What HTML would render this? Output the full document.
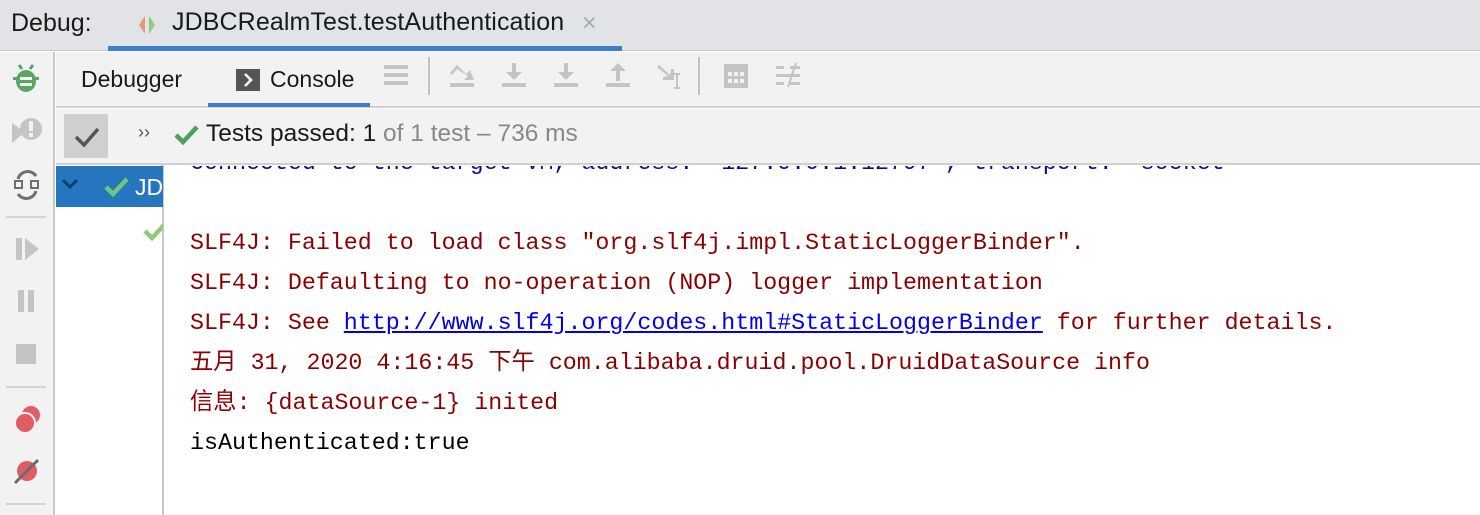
<!DOCTYPE html>
<html><head><meta charset="utf-8"><style>
*{margin:0;padding:0;box-sizing:border-box}
body{width:1480px;height:515px;overflow:hidden;background:#fff;font-family:"Liberation Sans","Noto Sans CJK SC",sans-serif;position:relative}
.abs{position:absolute}
.mono{font-family:"Liberation Mono","Noto Sans CJK SC",monospace;font-size:23.3px;white-space:pre}
</style></head><body>
<!-- top bar -->
<div class="abs" style="left:0;top:0;width:1480px;height:51px;background:#e1e3e7;border-bottom:1px solid #c9c9c9"></div>
<div class="abs" style="left:11px;top:9px;font-size:25px;color:#1a1a1a">Debug:</div>
<svg class="abs" style="left:136px;top:14px" width="24" height="22"><path d="M9 2 L3 11 L9 20Z" fill="#e8987a"/><path d="M13 2 L19 11 L13 20Z" fill="#8fcb7a"/></svg>
<div class="abs" style="left:172px;top:8px;font-size:25px;color:#1a1a1a;letter-spacing:0.1px">JDBCRealmTest.testAuthentication</div>
<div class="abs" style="left:582px;top:9px;font-size:25px;color:#aaa">×</div>
<div class="abs" style="left:108px;top:46px;width:514px;height:5px;background:#3d7fc8"></div>
<!-- left toolbar -->
<div class="abs" style="left:0;top:52px;width:55px;height:463px;background:#f2f2f2;border-right:2px solid #c9c9c9"></div>
<svg class="abs" style="left:10px;top:62px" width="32" height="34"><path d="M9 3 L12 7 M23 3 L20 7" stroke="#5aa564" stroke-width="3"/><ellipse cx="16" cy="19" rx="10" ry="11" fill="#5aa564"/><rect x="3" y="15" width="26" height="3" fill="#5aa564"/><rect x="10" y="15" width="12" height="3" fill="#f2f2f2"/><rect x="10" y="21" width="12" height="3" fill="#f2f2f2"/></svg>
<svg class="abs" style="left:10px;top:115px" width="34" height="32"><path d="M2 8 L15 17 L2 28Z" fill="#c4c4c4"/><circle cx="21" cy="14" r="11" fill="#c4c4c4"/><rect x="19" y="6" width="4" height="10" fill="#f2f2f2"/><rect x="19" y="18" width="4" height="4" fill="#f2f2f2"/></svg>
<svg class="abs" style="left:12px;top:167px" width="30" height="36"><path d="M6 12 A10 10 0 0 1 24 9" stroke="#6f6f6f" stroke-width="3" fill="none"/><path d="M24 24 A10 10 0 0 1 6 27" stroke="#6f6f6f" stroke-width="3" fill="none"/><rect x="3" y="14" width="7" height="7" stroke="#6f6f6f" stroke-width="2" fill="none"/><rect x="19" y="14" width="7" height="7" stroke="#6f6f6f" stroke-width="2" fill="none"/></svg>
<div class="abs" style="left:6px;top:216px;width:40px;height:2px;background:#d4d4d4"></div>
<svg class="abs" style="left:14px;top:236px" width="28" height="26"><rect x="2" y="2" width="6" height="22" fill="#c4c4c4"/><path d="M11 2 L25 13 L11 24Z" fill="#c4c4c4"/></svg>
<svg class="abs" style="left:16px;top:288px" width="20" height="26"><rect x="2" y="2" width="6" height="22" fill="#c4c4c4"/><rect x="12" y="2" width="6" height="22" fill="#c4c4c4"/></svg>
<div class="abs" style="left:16px;top:344px;width:20px;height:20px;background:#c4c4c4"></div>
<div class="abs" style="left:6px;top:386px;width:40px;height:2px;background:#d4d4d4"></div>
<svg class="abs" style="left:12px;top:404px" width="30" height="30"><circle cx="19" cy="11" r="9" fill="#e05d63"/><circle cx="13" cy="19" r="10" fill="#e05d63" stroke="#f2f2f2" stroke-width="2"/></svg>
<svg class="abs" style="left:12px;top:456px" width="30" height="30"><circle cx="15" cy="15" r="10" fill="#e05d63"/><path d="M3 27 L26 4" stroke="#6b6b6b" stroke-width="3"/></svg>
<div class="abs" style="left:6px;top:503px;width:40px;height:2px;background:#d4d4d4"></div>
<!-- toolbar row -->
<div class="abs" style="left:56px;top:52px;width:1424px;height:56px;background:#f2f2f2;border-bottom:2px solid #d0d0d0"></div>
<div class="abs" style="left:81px;top:66px;font-size:23px;color:#1a1a1a">Debugger</div>
<svg class="abs" style="left:236px;top:69px" width="24" height="22"><rect width="24" height="22" fill="#555"/><path d="M9 5 L15 11 L9 17" stroke="#fff" stroke-width="2.5" fill="none"/></svg>
<div class="abs" style="left:270px;top:66px;font-size:23px;color:#1a1a1a">Console</div>
<div class="abs" style="left:208px;top:103px;width:162px;height:4px;background:#3d7fc8"></div>
<svg class="abs" style="left:370px;top:55px" width="450" height="50" fill="#c4c4c4">
<rect x="14" y="10" width="24" height="4"/><rect x="14" y="18" width="24" height="4"/><rect x="14" y="26" width="24" height="4"/>
<rect x="58" y="2" width="2" height="38"/>
<rect x="80" y="28" width="24" height="4"/><path d="M80 18 L87 10 L96 19 L100 15 L104 25 L94 25 L98 21 L87 14 L82 20Z"/>
<rect x="132" y="28" width="24" height="4"/><rect x="142" y="8" width="4" height="12"/><path d="M136 17 L152 17 L144 25Z"/>
<rect x="184" y="28" width="24" height="4"/><rect x="194" y="8" width="4" height="12"/><path d="M188 17 L204 17 L196 25Z"/>
<rect x="236" y="28" width="24" height="4"/><rect x="246" y="14" width="4" height="12"/><path d="M240 16 L256 16 L248 8Z"/>
<path d="M289 10 L300 20 L301 14 L304 14 L304 25 L293 25 L293 22 L298 21 L287 12Z"/><rect x="304" y="18" width="6" height="2"/><rect x="306" y="18" width="2" height="16"/><rect x="304" y="32" width="6" height="2"/>
<rect x="328" y="2" width="2" height="38"/>
<path d="M354 9 h24 v24 h-24Z M358 17 v4 h4 v-4Z M364 17 v4 h4 v-4Z M370 17 v4 h4 v-4Z M358 24 v4 h4 v-4Z M364 24 v4 h4 v-4Z M370 24 v4 h4 v-4Z" fill-rule="evenodd"/>
<rect x="406" y="11" width="8" height="3"/><rect x="406" y="19" width="24" height="3"/><rect x="406" y="27" width="8" height="3"/><rect x="420" y="11" width="10" height="3"/><rect x="420" y="27" width="10" height="3"/><path d="M418 32 L426 8" stroke="#c4c4c4" stroke-width="2"/>
</svg>
<!-- tests row -->
<div class="abs" style="left:56px;top:109px;width:1424px;height:56px;background:#f2f2f2;border-bottom:2px solid #d0d0d0"></div>
<div class="abs" style="left:64px;top:114px;width:44px;height:44px;background:#cfcfcf"></div>
<svg class="abs" style="left:74px;top:126px" width="26" height="22"><path d="M2 11 L10 19 L24 3" stroke="#555" stroke-width="3.5" fill="none"/></svg>
<div class="abs" style="left:138px;top:122px;font-size:18px;color:#555">››</div>
<svg class="abs" style="left:174px;top:124px" width="26" height="22"><path d="M2 11 L9 18 L23 3" stroke="#4e9e62" stroke-width="4.5" fill="none"/></svg>
<div class="abs" style="left:206px;top:120px;font-size:24.5px;color:#1a1a1a">Tests passed: 1 <span style="color:#888">of 1 test – 736 ms</span></div>
<!-- tree -->
<div class="abs" style="left:56px;top:165px;width:108px;height:350px;background:#fff;border-right:2px solid #c9c9c9"></div>
<div class="abs" style="left:56px;top:166px;width:107px;height:41px;background:#2675bf"></div>
<svg class="abs" style="left:60px;top:176px" width="20" height="16"><path d="M3 4 L10 11 L17 4" stroke="#12406b" stroke-width="3" fill="none"/></svg>
<svg class="abs" style="left:104px;top:176px" width="26" height="22"><path d="M2 11 L9 18 L23 3" stroke="#6fc77d" stroke-width="4.5" fill="none"/></svg>
<div class="abs" style="left:135px;top:174px;font-size:23px;color:#fff;width:28px;overflow:hidden;white-space:nowrap">JDBC</div>
<svg class="abs" style="left:143px;top:220px" width="20" height="22"><path d="M2 11 L9 18 L23 3" stroke="#8fcb7a" stroke-width="4.5" fill="none"/></svg>
<!-- console -->
<div class="abs" style="left:166px;top:166px;width:1314px;height:349px;overflow:hidden">
<div class="abs mono" style="left:24px;top:-16px;color:#0b0b8f">Connected to the target VM, address: '127.0.0.1:12797', transport: 'socket'</div>
</div>
<div class="abs mono" style="left:190px;top:223px;color:#8b0000;line-height:40px">SLF4J: Failed to load class "org.slf4j.impl.StaticLoggerBinder".
SLF4J: Defaulting to no-operation (NOP) logger implementation
SLF4J: See <span style="color:#0000ee;text-decoration:underline">http://www.slf4j.org/codes.html#StaticLoggerBinder</span> for further details.
五月 31, 2020 4:16:45 下午 com.alibaba.druid.pool.DruidDataSource info
信息: {dataSource-1} inited
<span style="color:#000">isAuthenticated:true</span></div>
</body></html>
